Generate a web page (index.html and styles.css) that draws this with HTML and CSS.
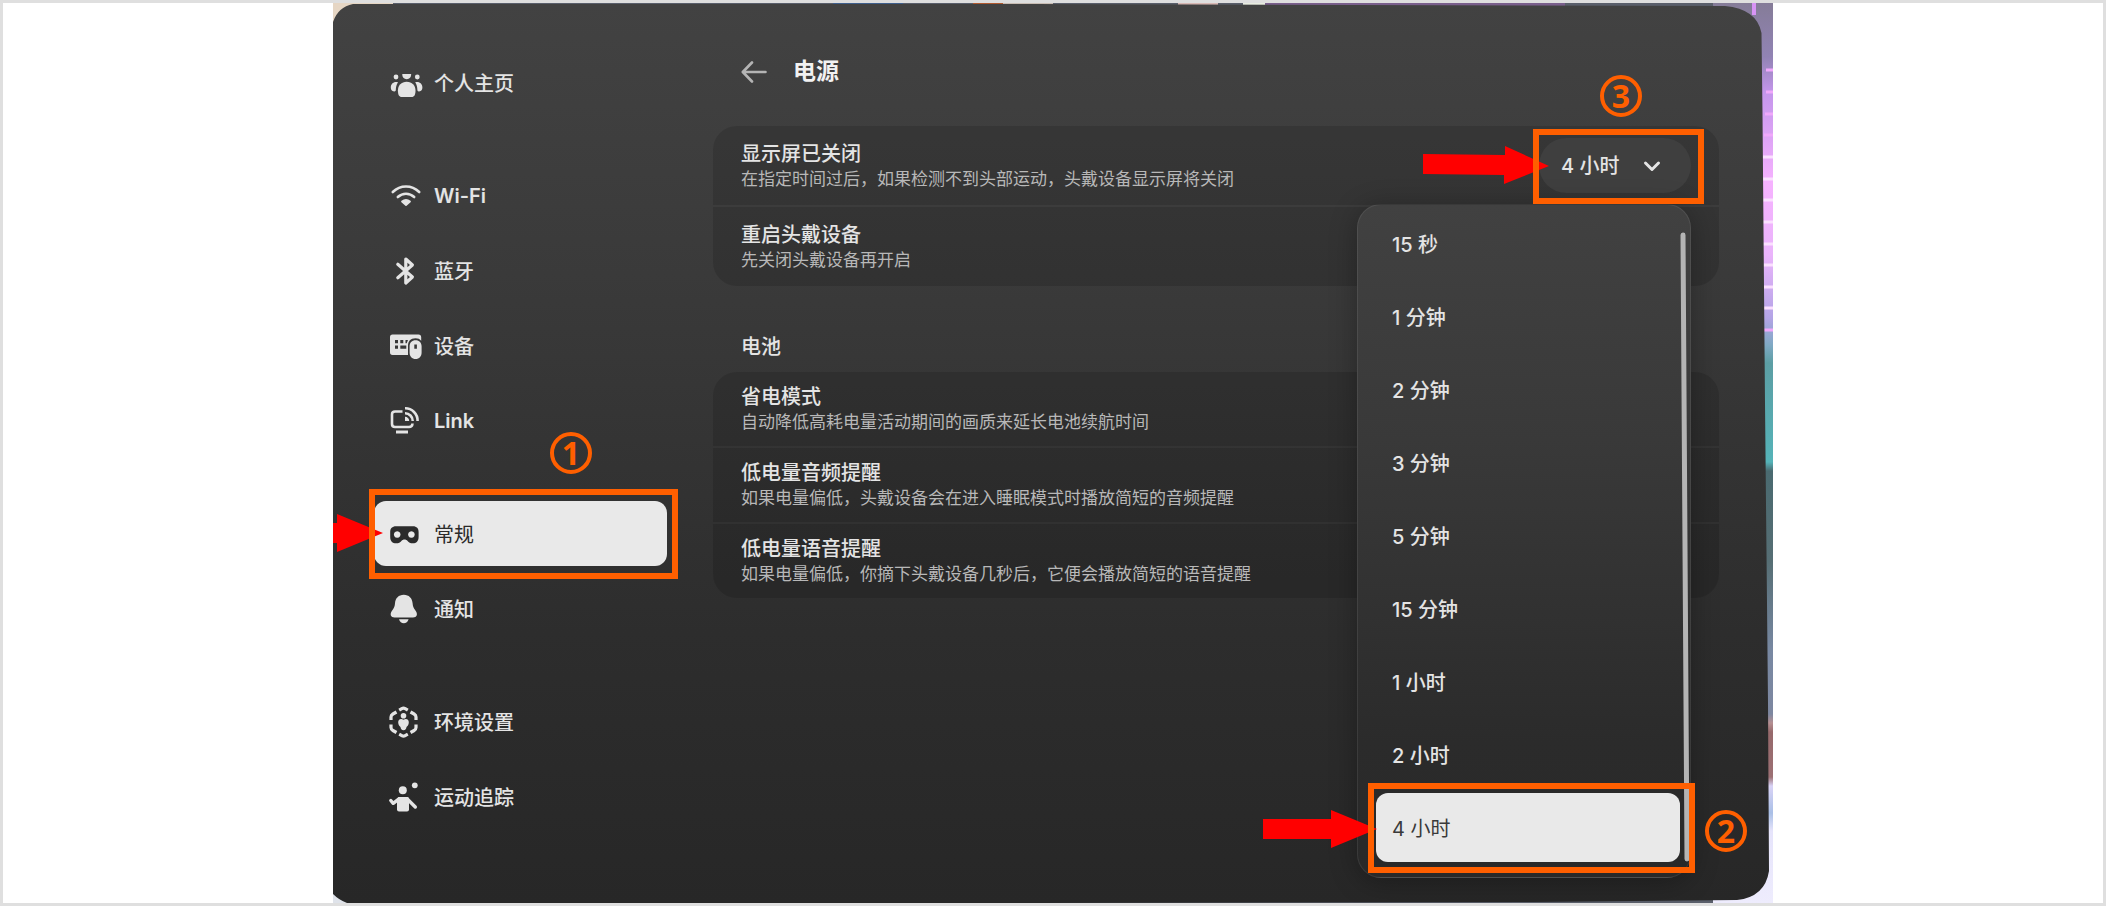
FILE: index.html
```html
<!DOCTYPE html>
<html lang="zh-CN">
<head>
  <meta charset="UTF-8" />
  <meta name="viewport" content="width=device-width, initial-scale=1.0"/>
  <title>电源</title>
  <link rel="stylesheet" href="styles.css">
</head>
<body>

  <div class="frame">
    <div class="stage">

      <!-- Room behind the panel, and the panel shape -->
      <svg class="backdrop" viewBox="0 0 1440 900" preserveAspectRatio="none" aria-hidden="true">
        <defs>
          <linearGradient id="room" x1="0" y1="0" x2="0" y2="1">
            <stop offset="0" stop-color="#857c98"/>
            <stop offset="0.06" stop-color="#9183b4"/>
            <stop offset="0.1" stop-color="#c596ec"/>
            <stop offset="0.2" stop-color="#f6b2ff"/>
            <stop offset="0.28" stop-color="#eab4fb"/>
            <stop offset="0.35" stop-color="#b3a4e6"/>
            <stop offset="0.38" stop-color="#7fa9c4"/>
            <stop offset="0.4" stop-color="#5c9ea4"/>
            <stop offset="0.51" stop-color="#55b3b8"/>
            <stop offset="0.52" stop-color="#4a6a70"/>
            <stop offset="0.62" stop-color="#566e74"/>
            <stop offset="0.72" stop-color="#7888a2"/>
            <stop offset="0.79" stop-color="#7d87a0"/>
            <stop offset="0.8" stop-color="#b58f92"/>
            <stop offset="0.81" stop-color="#96696b"/>
            <stop offset="0.86" stop-color="#9c7074"/>
            <stop offset="0.87" stop-color="#d9d3f6"/>
            <stop offset="0.9" stop-color="#a9bfe6"/>
            <stop offset="0.92" stop-color="#e6e4fb"/>
            <stop offset="1" stop-color="#eeecfd"/>
          </linearGradient>
          <linearGradient id="panel" x1="0" y1="0" x2="0" y2="1">
            <stop offset="0" stop-color="#424242"/>
            <stop offset="0.3" stop-color="#3a3a3a"/>
            <stop offset="0.7" stop-color="#2d2d2d"/>
            <stop offset="1" stop-color="#272727"/>
          </linearGradient>
        </defs>
        <rect width="1440" height="900" fill="#5a5f6b"/>
        <rect width="60" height="40" fill="#e6d6c4"/>
        <rect x="500" width="70" height="3" fill="#3f5f8c"/>
        <rect x="640" width="30" height="3" fill="#b0592f"/>
        <rect x="670" width="50" height="3" fill="#c9bdb4"/>
        <rect x="845" width="40" height="3" fill="#d8b8b4"/>
        <rect x="910" width="22" height="3" fill="#e8ece0"/>
        <rect x="932" width="300" height="3" fill="#7a5f8c"/>
        <rect y="870" width="60" height="30" fill="#dfe3ea"/>
        <rect x="1380" width="60" height="900" fill="url(#room)"/>
        <path d="M1421 0v12" stroke="#d894f5" stroke-width="4"/>
        <path d="M1433 67h7M1433 89h7M1432 111h8M1431 132h9" stroke="#f0a8fb" stroke-width="3"/>
        <path d="M1430 154h10M1430 176h10M1430 197h10M1430 219h10M1430 241h10M1430 262h10M1430 284h10M1430 305h10" stroke="#fbe0ff" stroke-width="3"/>
        <path d="M1430 327h10" stroke="#f0a8fb" stroke-width="3"/>
        <path d="M0 19Q5 4 20 1L60 1L700 1L1392 3Q1424 6 1428.500 30L1429.500 110L1432 400L1435 700L1436 868Q1432 894 1404 897L1200 899L700 900L14 900Q6 897 0 891Z" fill="url(#panel)"/>
      </svg>

      <nav class="sidebar">
        <ul class="nav-group">
          <li>
            <a href="#" class="nav-item">
              <svg class="icon" viewBox="0 0 32 32" fill="currentColor">
                <circle cx="6" cy="10" r="2.400"/>
                <circle cx="27.300" cy="10" r="2.400"/>
                <path d="M12.300 7h8.800c.3 3-1.700 5.200-4.400 5.200S12 10 12.300 7z"/>
                <path d="M16.700 14.700c5.300 0 8.800 3.600 8.800 8.800 0 4.400-1.300 6.500-3.800 6.500h-10c-2.500 0-3.800-2.100-3.800-6.500 0-5.200 3.500-8.800 8.800-8.800z"/>
                <path d="M8 15.200c-4.400-1-7.200 1.600-7.200 5.300 0 2.200 1 3.700 3.300 3.900C5.300 24.500 5.800 24 5.800 23c0-3 .7-5.500 2.200-7.800z"/>
                <path d="M25.200 15.200c4.400-1 7.200 1.600 7.200 5.300 0 2.200-1 3.700-3.300 3.900-1.200.1-1.700-.4-1.700-1.400 0-3-.7-5.500-2.200-7.800z"/>
              </svg>
              <span>个人主页</span>
            </a>
          </li>
        </ul>

        <ul class="nav-group">
          <li>
            <a href="#" class="nav-item latin">
              <svg class="icon" viewBox="0 0 32 32" fill="none" stroke="currentColor" stroke-width="2.600" stroke-linecap="round">
                <path d="M2.800 12C10.400 4.600 21.600 4.600 29.200 12"/>
                <path d="M7.800 17c4.900-4.400 11.500-4.400 16.400 0"/>
                <path d="M12 21.500c2.500-2 5.500-2 8 0l-4 3.500z" fill="currentColor" stroke-width="1.800" stroke-linejoin="round"/>
              </svg>
              <span>Wi-Fi</span>
            </a>
          </li>
          <li>
            <a href="#" class="nav-item">
              <svg class="icon" viewBox="0 0 32 32" fill="none" stroke="currentColor" stroke-width="3.200" stroke-linecap="round" stroke-linejoin="round">
                <path d="M7.800 9.200L22.400 22l-6.600 6V4l6.600 6L7.800 22.800"/>
              </svg>
              <span>蓝牙</span>
            </a>
          </li>
          <li>
            <a href="#" class="nav-item">
              <svg class="icon" viewBox="0 0 32 32" fill="currentColor">
                <path fill-rule="evenodd" d="M2.500 4.500h26c1.700 0 2.700 1 2.700 2.800v3.400c-1.400-1.700-3-2.500-5.700-2.500-5 0-7.500 3-7.500 7.500V25H2.500C.8 25 0 24 0 22.300v-15C0 5.500.8 4.500 2.500 4.500zM5 10v3.200h3V10zM10.300 10v3.200h3V10zM15.500 10v3.200h1.200L18 10zM5 15.500v3.200h3v-3.200zM10.300 15.500v3.200h6v-3.200z"/>
                <path fill-rule="evenodd" d="M25.600 10.300c3.800 0 6 2.600 6 6v6.400c0 3.600-2.400 6.300-6 6.300s-6-2.700-6-6.300v-6.400c0-3.400 2.200-6 6-6zm-1.300 4.200v4.300h2.600v-4.300z"/>
              </svg>
              <span>设备</span>
            </a>
          </li>
          <li>
            <a href="#" class="nav-item latin">
              <svg class="icon" viewBox="0 0 32 32" fill="none" stroke="currentColor" stroke-width="2.600">
                <path d="M12.500 6.500H5Q2 6.500 2 9.500v9.500q0 3 3 3h14q3.300 0 3.500-3.500"/>
                <path d="M6 27h12" stroke-width="3"/>
                <path d="M15 3.300A12.400 12.400 0 0 1 27.600 16M15 8.300A7.600 7.600 0 0 1 22.700 16"/>
                <path d="M15 11.800A4.200 4.200 0 0 1 19.200 16H15z" fill="currentColor" stroke="none"/>
              </svg>
              <span>Link</span>
            </a>
          </li>
        </ul>

        <ul class="nav-group">
          <li>
            <a href="#" class="nav-item active" aria-current="page">
              <svg class="icon" viewBox="0 0 32 32" fill="currentColor">
                <path fill-rule="evenodd" d="M6 8.300h17c3.700 0 5.600 2.200 5.600 5.600v5c0 4.200-2.200 6.400-5.800 6.400-2.600 0-3.900-.7-5.200-2.400-1.500-2-4.700-2-6.200 0-1.300 1.700-2.600 2.400-5.200 2.400C2.400 25.300.2 23.100.2 18.900v-5c0-3.400 2-5.600 5.800-5.600zM7.200 13.200a3.300 3.300 0 1 0 .01 0zM21.400 13.200a3.300 3.300 0 1 0 .01 0z"/>
              </svg>
              <span>常规</span>
            </a>
          </li>
          <li>
            <a href="#" class="nav-item">
              <svg class="icon" viewBox="0 0 32 32" fill="currentColor">
                <path d="M13.800 1.700c5.200 0 8.400 3.500 8.800 8.500.2 3 .8 4.700 3 7.600 2.500 3.500 1.300 6.700-2.600 6.700H4.600c-3.900 0-5.100-3.200-2.600-6.700 2.200-2.900 2.800-4.600 3-7.600.4-5 3.600-8.500 8.800-8.500z"/>
                <path d="M9 26.300h9.600c-.8 2.600-2.500 3.900-4.800 3.900S9.800 28.900 9 26.300z"/>
              </svg>
              <span>通知</span>
            </a>
          </li>
        </ul>

        <ul class="nav-group">
          <li>
            <a href="#" class="nav-item">
              <svg class="icon" viewBox="0 0 32 32" fill="none" stroke="currentColor" stroke-width="3.200">
                <path d="M9.200 4.200l2.600-1.500q1.700-1 3.400 0l2.600 1.500M20.500 6l3.600 2q1.900 1.100 1.900 3v3M26 18.500v3q0 1.900-1.900 3l-3.600 2M17.800 28.200l-2.600 1.400q-1.700 1-3.400 0l-2.600-1.400M6.500 26.500L2.900 24.500Q1 23.400 1 21.500v-3M1 14v-3Q1 9.100 2.900 8l3.600-2"/>
                <g fill="currentColor" stroke="none">
                  <circle cx="13.500" cy="9.800" r="2.800"/>
                  <path d="M13.500 13.800c3.200-1.800 5.500.2 5.300 3-.2 2.300-1.300 3.500-2.300 4.300-.2 2-1 3.100-3 3.100s-2.800-1.100-3-3.100c-1-.8-2.100-2-2.300-4.300-.2-2.800 2.100-4.800 5.300-3z"/>
                </g>
              </svg>
              <span>环境设置</span>
            </a>
          </li>
          <li>
            <a href="#" class="nav-item">
              <svg class="icon" viewBox="0 0 32 32" fill="currentColor">
                <circle cx="12.800" cy="9.200" r="4"/>
                <circle cx="24.800" cy="4.300" r="2.900"/>
                <path d="M8.500 16h8.800q1.700 0 1.700 2v10.500q0 2-2 2H9q-2 0-2-2V18z"/>
                <path d="M.8 19.500l2.400 2.800L9 17.800M17 17.800l8.300 8.200" fill="none" stroke="currentColor" stroke-width="3.400" stroke-linecap="round" stroke-linejoin="round"/>
              </svg>
              <span>运动追踪</span>
            </a>
          </li>
        </ul>
      </nav>

      <main class="content">
        <header class="page-header">
          <button class="back-btn" aria-label="返回">
            <svg viewBox="0 0 28 28" fill="none" stroke="currentColor" stroke-width="2.600" stroke-linecap="round" stroke-linejoin="round">
              <path d="M24.500 14H2M11 4.500L1.800 14l9.200 9.500"/>
            </svg>
          </button>
          <h1>电源</h1>
        </header>

        <section class="card tall">
          <div class="row">
            <div>
              <label class="row-title" for="displayOff">显示屏已关闭</label>
              <p class="row-desc">在指定时间过后，如果检测不到头部运动，头戴设备显示屏将关闭</p>
            </div>
            <div class="dropdown">
              <select id="displayOff">
                <option>4 小时</option>
              </select>
              <svg class="chevron" viewBox="0 0 20 20" fill="none" stroke="currentColor" stroke-width="3" stroke-linecap="round" stroke-linejoin="round">
                <path d="M3.500 7l6.500 6.500L16.500 7"/>
              </svg>

              <div class="menu" role="listbox" aria-label="显示屏已关闭">
                <button role="option">15 秒</button>
                <button role="option">1 分钟</button>
                <button role="option">2 分钟</button>
                <button role="option">3 分钟</button>
                <button role="option">5 分钟</button>
                <button role="option">15 分钟</button>
                <button role="option">1 小时</button>
                <button role="option">2 小时</button>
                <button role="option" class="selected" aria-selected="true">4 小时</button>
                <svg class="scrollbar" viewBox="0 0 12 630" preserveAspectRatio="none" aria-hidden="true">
                  <path d="M5 3L9 627" stroke="#b4b4b4" stroke-width="5" stroke-linecap="round"/>
                </svg>
              </div>
            </div>
          </div>
          <div class="row">
            <div>
              <h3 class="row-title">重启头戴设备</h3>
              <p class="row-desc">先关闭头戴设备再开启</p>
            </div>
          </div>
        </section>

        <h2 class="section-title">电池</h2>

        <section class="card">
          <div class="row">
            <div>
              <h3 class="row-title">省电模式</h3>
              <p class="row-desc">自动降低高耗电量活动期间的画质来延长电池续航时间</p>
            </div>
          </div>
          <div class="row">
            <div>
              <h3 class="row-title">低电量音频提醒</h3>
              <p class="row-desc">如果电量偏低，头戴设备会在进入睡眠模式时播放简短的音频提醒</p>
            </div>
          </div>
          <div class="row">
            <div>
              <h3 class="row-title">低电量语音提醒</h3>
              <p class="row-desc">如果电量偏低，你摘下头戴设备几秒后，它便会播放简短的语音提醒</p>
            </div>
          </div>
        </section>
      </main>

      <!-- Step markers -->
      <svg class="arrow arrow-1" viewBox="0 0 50 38" aria-hidden="true"><path d="M0 9h4V0l46 19L4 38v-9H0z"/></svg>
      <div class="mark mark-1"></div>
      <span class="step step-1">1</span>

      <svg class="arrow arrow-2" viewBox="0 0 114 38" aria-hidden="true"><path d="M0 9h68V0l46 19-46 19v-9H0z"/></svg>
      <div class="mark mark-2"></div>
      <span class="step step-2">2</span>

      <svg class="arrow arrow-3" viewBox="0 0 126 38" aria-hidden="true"><path d="M0 8l82 1V0l44 20-45 18v-9l-81-1z"/></svg>
      <div class="mark mark-3"></div>
      <span class="step step-3">3</span>

    </div>
  </div>

</body>
</html>
```

FILE: styles.css
```css
* {
  margin: 0;
  padding: 0;
  box-sizing: border-box;
}

body {
  background-color: #fff;
  font-family: Inter, "Noto Sans CJK SC", sans-serif;
  font-size: 20px;
  color: #e4e4e4;
}

button,
select {
  font: inherit;
  color: inherit;
  border: none;
  background: none;
  cursor: pointer;
}

.frame {
  min-height: 100vh;
  border: 3px solid #dfdfdf;
}

.stage {
  position: relative;
  display: flex;
  gap: 46px;
  max-width: 1440px;
  min-height: calc(100vh - 6px);
  margin: 0 auto;
  padding: 0 54px 0 41px;
  overflow: hidden;
}

.backdrop {
  position: absolute;
  top: 0;
  left: 0;
  width: 100%;
  height: 100%;
}

/* Sidebar */
.sidebar {
  position: relative;
  display: flex;
  flex-direction: column;
  flex: 0 0 293px;
  gap: 48px;
  padding-top: 47px;
}

.nav-group {
  display: flex;
  flex-direction: column;
  gap: 10px;
  list-style: none;
}

.nav-item {
  display: flex;
  align-items: center;
  gap: 12px;
  height: 65px;
  padding: 0 16px;
  border-radius: 12px;
  color: #e4e4e4;
  font-weight: 500;
  text-decoration: none;
}

.nav-item.latin {
  font-weight: 600;
}

.nav-item.active {
  background-color: #e9e9e9;
  color: #2b2b2b;
  font-weight: 400;
}

.icon {
  flex: none;
  width: 32px;
  height: 32px;
  overflow: visible;
}

/* Content */
.content {
  position: relative;
  flex: 1;
  padding-top: 52px;
}

.page-header {
  display: flex;
  align-items: center;
  gap: 24px;
  height: 34px;
  margin-bottom: 37px;
  padding-left: 28px;
}

.page-header h1 {
  font-size: 23px;
  font-weight: 700;
  line-height: 32px;
  padding-bottom: 2px;
  color: #f2f2f2;
}

.back-btn {
  display: flex;
  width: 28px;
  height: 28px;
  color: #b4b4b4;
}

.section-title {
  margin: 46px 0 10px;
  padding-left: 28px;
  font-size: 20px;
  font-weight: 500;
  line-height: 30px;
}

.card {
  display: flex;
  flex-direction: column;
  gap: 2px;
}

.row {
  display: flex;
  justify-content: space-between;
  align-items: center;
  height: 74px;
  padding: 0 28px;
  background-color: rgba(0, 0, 0, 0.13);
}

.tall .row {
  height: 79px;
}

.row:first-child {
  border-radius: 24px 24px 0 0;
}

.row:last-child {
  border-radius: 0 0 24px 24px;
}

.row-title {
  display: block;
  font-size: 20px;
  font-weight: 500;
  line-height: 26px;
}

.row-desc {
  font-size: 17px;
  line-height: 24px;
  color: #b8b8b8;
}

/* Dropdown */
.dropdown {
  position: relative;
  width: 152px;
}

.dropdown select {
  display: block;
  appearance: none;
  width: 100%;
  height: 55px;
  padding: 0 22px;
  border-radius: 28px;
  background-color: #3f3f3f;
  font-weight: 500;
}

.chevron {
  position: absolute;
  top: 18px;
  right: 29px;
  width: 20px;
  height: 20px;
  pointer-events: none;
}

.menu {
  position: absolute;
  top: 66px;
  right: 0;
  z-index: 1;
  display: flex;
  flex-direction: column;
  gap: 4px;
  width: 334px;
  padding: 4px 10px 15px 18px;
  border: 1px solid rgba(255, 255, 255, 0.08);
  border-radius: 24px;
  background: linear-gradient(#414141, #393939 35%, #2b2b2b 80%, #292929);
  box-shadow: 0 4px 28px rgba(0, 0, 0, 0.3);
}

.menu button {
  height: 69px;
  padding: 0 16px;
  border-radius: 12px;
  font-weight: 500;
  text-align: left;
}

.menu .selected {
  background-color: #e9e9e9;
  color: #3a3a3a;
  font-weight: 400;
}

.scrollbar {
  position: absolute;
  top: 27px;
  right: 0;
  width: 12px;
  height: 630px;
}

/* Step markers */
.mark,
.step,
.arrow {
  position: absolute;
  z-index: 2;
  pointer-events: none;
}

.mark {
  border: 6px solid #ff5f00;
}

.mark-1 {
  top: 486px;
  left: 36px;
  width: 309px;
  height: 90px;
}

.mark-2 {
  top: 780px;
  right: 78px;
  width: 327px;
  height: 90px;
}

.mark-3 {
  top: 126px;
  right: 69px;
  width: 171px;
  height: 75px;
}

.step {
  display: flex;
  justify-content: center;
  align-items: center;
  width: 42px;
  height: 42px;
  border: 4px solid #ff5f00;
  border-radius: 50%;
  color: #ff5f00;
  font-family: "Noto Sans", sans-serif;
  font-size: 32px;
  font-weight: 700;
  line-height: 34px;
}

.step-1 {
  top: 429px;
  left: 217px;
}

.step-2 {
  top: 807px;
  right: 26px;
}

.step-3 {
  top: 72px;
  right: 131px;
}

.arrow {
  height: 38px;
  fill: #ff0000;
}

.arrow-1 {
  top: 511px;
  left: 0;
  width: 50px;
}

.arrow-2 {
  top: 807px;
  right: 396px;
  width: 114px;
}

.arrow-3 {
  top: 143px;
  right: 224px;
  width: 126px;
}
```
